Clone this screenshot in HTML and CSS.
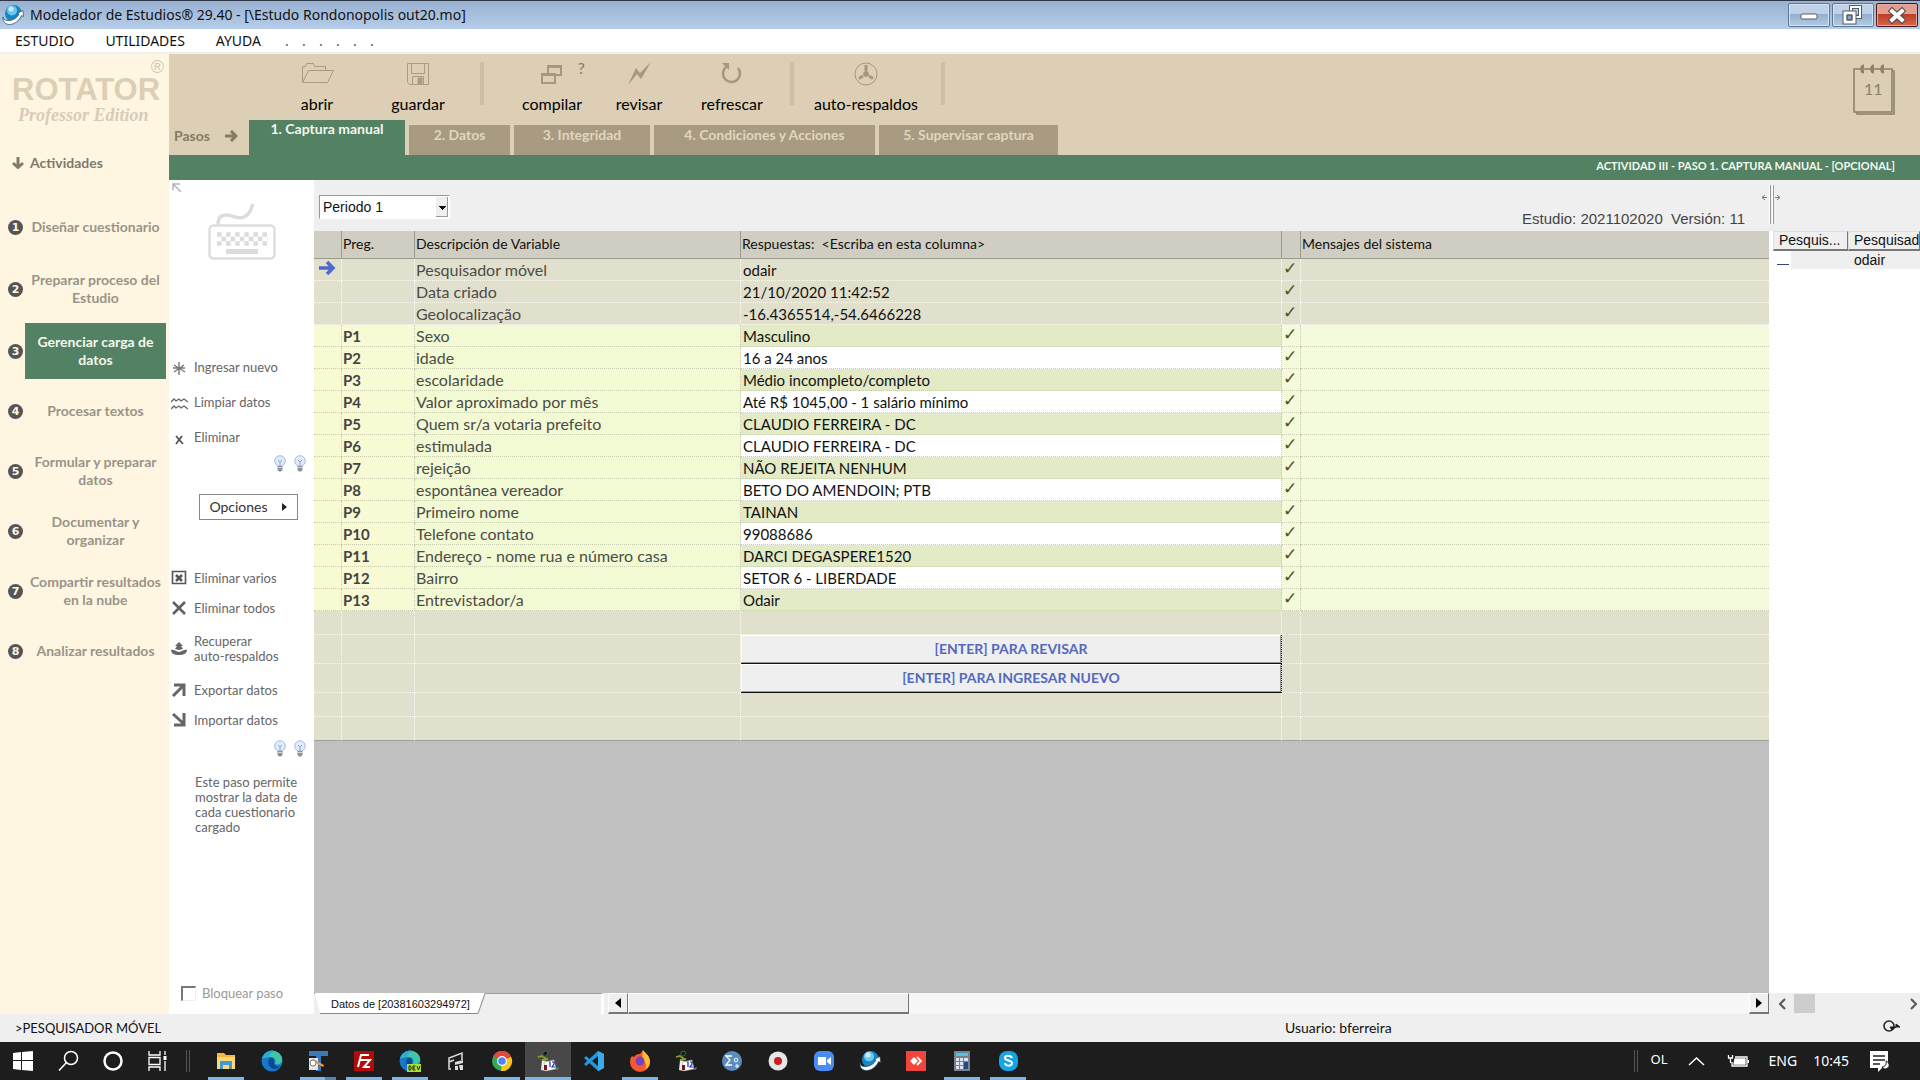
FILE: index.html
```html
<!DOCTYPE html>
<html lang="es">
<head>
<meta charset="utf-8">
<title>Modelador de Estudios</title>
<link rel="stylesheet" href="styles.css">
</head>
<body>
<svg class="defs" aria-hidden="true">
  <symbol id="bulb" viewBox="0 0 14 17">
    <circle cx="7" cy="6" r="5.3" fill="#dfeafa" stroke="#a9bcd8"/>
    <path d="M5 5l2 2 2-2M7 7v4" fill="none" stroke="#8ba6cf"/>
    <path d="M4.500 11h5v4l-1.500 1.500h-2L4.500 15z" fill="#8f9094"/>
    <path d="M4.500 12.500h5" stroke="#d8d8dc"/>
  </symbol>
  <symbol id="globe" viewBox="0 0 22 22">
    <circle cx="11.500" cy="9.500" r="8.500" fill="#1687c4"/>
    <circle cx="10" cy="6.500" r="5" fill="#6cc8ee"/>
    <circle cx="9" cy="5" r="2.500" fill="#c8eefa"/>
    <path d="M1 13c0 4 7 5 12 1.500 2-1.500 3-2.500 4-4.500l-2-.500 6-3 .500 6-2-1c-2 5-7 9-12 9-4 0-7-3-6.500-7.500z" fill="#fff" stroke="#26485e" stroke-width=".7"/>
  </symbol>
  <symbol id="rotator" viewBox="0 0 22 22">
    <path d="M5 10l4 1v10l-5-1z" fill="#eee"/>
    <path d="M7 12l10-2 2 9-10 2z" fill="#fff" stroke="#999" stroke-width=".5"/>
    <path d="M1 7l4-1 4 3M5 10l6-1" stroke="#8fa02a" stroke-width="1.800" fill="none"/>
    <path d="M6 2l3-1 2 2-2 3H6z" fill="#101c10" stroke="#2c7a2c"/>
    <path d="M7 15h3v5H7z" fill="#7b1420"/>
    <path d="M12 12h1v5M15 12h2v2l-2 3h3" stroke="#1c2fa8" stroke-width="1.200" fill="none"/>
    <path d="M18 19l4-2-1 3z" fill="#777"/>
  </symbol>
  <symbol id="edge" viewBox="0 0 22 22">
    <circle cx="11" cy="11" r="10.500" fill="#1679cb"/>
    <path d="M1 9C3 2 9 0 13 1c6 1 9 6 8 10-1 3-4 4-7 3 2-4-1-7-5-7-4 0-7 1-8 2z" fill="#3fc6a8"/>
    <path d="M1 9C3 2 9 0 13 1c-2 1-5 3-5 6C5 6 2 7 1 9z" fill="#2aa9d8"/>
    <path d="M8 9c-2 4 0 9 5 10 3 0 5-1 7-3-3 1-6 0-7-3-1-2 1-3 0-4-2-2-4-1-5 0z" fill="#0c4a90"/>
  </symbol>
</svg>

<header class="titlebar">
  <svg class="app-icon"><use href="#globe"/></svg>
  <h1>Modelador de Estudios® 29.40 - [\Estudo Rondonopolis out20.mo]</h1>
  <div class="window-controls">
    <button class="wbtn" aria-label="Minimizar"><svg width="20" height="20"><rect x="2" y="9" width="16" height="5" rx="1" fill="#fff" stroke="#555c68"/></svg></button>
    <button class="wbtn" aria-label="Restaurar"><svg width="22" height="22" fill="none"><path d="M9 3h9v10H9z" stroke="#555c68" stroke-width="4"/><path d="M9 3h9v10H9z" stroke="#fff" stroke-width="2"/><path d="M3 9h9v9H3z" stroke="#555c68" stroke-width="5" fill="#86a3c4"/><path d="M3 9h9v9H3z" stroke="#fff" stroke-width="3"/><path d="M5 11h5v5H5z" stroke="#555c68"/></svg></button>
    <button class="wbtn close" aria-label="Cerrar"><svg width="20" height="20" stroke-linecap="square"><path d="M5 6l10 9M15 6L5 15" stroke="#50434a" stroke-width="6"/><path d="M5 6l10 9M15 6L5 15" stroke="#fff" stroke-width="4"/></svg></button>
  </div>
</header>

<nav class="menubar">
  <a href="#">ESTUDIO</a><a href="#">UTILIDADES</a><a href="#">AYUDA</a>
  <span class="dots"><i>.</i><i>.</i><i>.</i><i>.</i><i>.</i><i>.</i></span>
</nav>

<div class="workspace">
  <aside class="sidebar">
    <div class="brand">
      <span class="brand-mark">®</span>
      <strong>ROTATOR</strong>
      <em>Professor Edition</em>
    </div>
    <h2 class="side-title"><svg width="12" height="12" fill="none" stroke="#877b63" stroke-width="3"><path d="M6 0v10M1 6l5 4.500L11 6"/></svg>Actividades</h2>
    <ol class="activities">
      <li><b>1</b><a href="#">Diseñar cuestionario</a></li>
      <li class="tall"><b>2</b><a href="#">Preparar proceso del Estudio</a></li>
      <li><b>3</b><a href="#" class="active">Gerenciar carga de datos</a></li>
      <li><b>4</b><a href="#">Procesar textos</a></li>
      <li><b>5</b><a href="#">Formular y preparar datos</a></li>
      <li><b>6</b><a href="#">Documentar y organizar</a></li>
      <li><b>7</b><a href="#">Compartir resultados en la nube</a></li>
      <li><b>8</b><a href="#">Analizar resultados</a></li>
    </ol>
  </aside>

  <div class="content">
    <div class="ribbon">
      <div class="toolbar">
        <button class="tool w-110"><svg width="34" height="24" fill="none" stroke="#aa9c80"><path d="M2.500 20.500V4.500h3l1-3h7l1 3h11v4M2.500 20.500l6-12h25l-6 12z"/></svg>abrir</button>
        <button class="tool w-92"><svg width="24" height="24" fill="none" stroke="#aa9c80"><path d="M1.500 1.500h21v21H3.500l-2-2zM5.500 1.500v10h13v-10M6.500 22.500v-8h11v8"/><path d="M12 16h4v6h-4z" fill="#aa9c80"/></svg>guardar</button>
        <span class="divider"></span>
        <button class="tool w-110 compile"><svg width="24" height="24" fill="none" stroke="#a6987b" stroke-width="2"><path d="M8 12V4h13v9h-5"/><path d="M8 4.500h13" stroke-width="3"/><path d="M2 12h13v9H2z"/><path d="M2 12.500h13" stroke-width="3"/></svg>compilar<span class="help">?</span></button>
        <button class="tool w-64"><svg width="24" height="24" fill="#a6987b"><path d="M24 0L14 17l-4-5-9 11L9 6l4 5z"/></svg>revisar</button>
        <button class="tool w-122"><svg width="22" height="24" fill="none" stroke="#a6987b" stroke-width="2.500"><path d="M5 5a8.500 8.500 0 1 0 12 1"/><path d="M1 1h7v7z" fill="#a6987b" stroke="none"/></svg>refrescar</button>
        <span class="divider"></span>
        <button class="tool w-142"><svg width="24" height="24" fill="none" stroke="#a6987b"><circle cx="12" cy="12" r="11"/><path d="M12 3v6M5 16.500l4-2.500M19 16.500l-4-2.500" stroke-width="3"/><circle cx="12" cy="12" r="2.500" fill="#a6987b"/></svg>auto-respaldos</button>
        <span class="divider"></span>
      </div>
      <div class="calendar">
        <svg width="44" height="52" fill="none" stroke="#8d8065" stroke-width="1.500"><path d="M2 5h38v43H2zM40 7h2v43H5v-2"/><g stroke-width="3"><path d="M12 2c-3 0-3 6 0 6M22 2c-3 0-3 6 0 6M32 2c-3 0-3 6 0 6"/></g></svg>
        <span>11</span>
      </div>
      <div class="tabs">
        <span class="steps">Pasos <svg width="13" height="12" fill="none" stroke="#877b63" stroke-width="3"><path d="M0 6h10M6 1l5 5-5 5"/></svg></span>
        <button class="tab current t-156">1. Captura manual</button>
        <button class="tab t-101">2. Datos</button>
        <button class="tab t-136">3. Integridad</button>
        <button class="tab t-221">4. Condiciones y Acciones</button>
        <button class="tab t-179">5. Supervisar captura</button>
      </div>
    </div>
    <div class="step-title">ACTIVIDAD III - PASO 1. CAPTURA MANUAL - [OPCIONAL]</div>

    <div class="panes">
      <section class="tools">
        <svg class="corner" width="10" height="10" fill="none" stroke="#b5b5b5" stroke-width="1.500"><path d="M1 7V1h7M1 1l8 8"/></svg>
        <svg class="keyboard" width="68" height="58" fill="none" stroke="#dcdcdc"><path d="M10 22c0-8 3-10 9-10s10 5 17 2c6-3 6-6 9-13" stroke-width="3.500"/><rect x="1.500" y="22.500" width="65" height="33" rx="4" stroke="#dfdde0" stroke-width="2.500"/><path d="M9 31.500h50" stroke-width="4.500" stroke-dasharray="4.500 4.600"/><path d="M13.500 36h46" stroke-width="4.500" stroke-dasharray="4.500 4.600"/><path d="M9 40.500h50" stroke-width="4.500" stroke-dasharray="4.500 4.600"/><path d="M18 48.500h32" stroke-width="5"/></svg>
        <div class="actions first">
          <button><svg width="16" height="16" stroke="#777" stroke-width="1.400"><path d="M8 2v13M3 5l11 7M13 5L3 12M2 8h12"/></svg>Ingresar nuevo</button>
          <button><svg width="18" height="16" fill="none" stroke="#666" stroke-width="1.300"><path d="M0 7l3-3 2 2 3-2 2 2 3-2 4 3M0 14l3-3 2 2 3-2 2 2 3-2 4 3"/></svg>Limpiar datos</button>
          <button><svg width="16" height="16" stroke="#555" stroke-width="1.800"><path d="M5 6l7 8M11 6l-6 8"/></svg>Eliminar</button>
        </div>
        <div class="bulbs"><svg><use href="#bulb"/></svg><svg><use href="#bulb"/></svg></div>
        <button class="options">Opciones <svg width="6" height="8"><path d="M0 0l5 4-5 4z" fill="#222"/></svg></button>
        <div class="actions second">
          <button><svg width="16" height="16" fill="none" stroke="#555" stroke-width="1.600"><path d="M1.500 1.500h13v12h-13z"/><path d="M5 5l6 6M11 5l-6 6" stroke-width="2.500"/></svg>Eliminar varios</button>
          <button><svg width="16" height="16" stroke="#606060" stroke-width="2.500"><path d="M2 2l12 12M14 2L2 14"/></svg>Eliminar todos</button>
          <button class="two-line"><svg width="17" height="16" fill="#666"><path d="M0 9c3-1 5 2 8 2s5-3 8-2c0 3-3 5-8 5s-8-2-8-5zM8 1l4 4h-2l2 3-4 1-4-1 2-3H4z"/></svg><span>Recuperar<br>auto-respaldos</span></button>
          <button><svg width="16" height="16" fill="none" stroke="#666" stroke-width="3"><path d="M2 14L13 3M3 3h10v11"/></svg>Exportar datos</button>
          <button><svg width="16" height="16" fill="none" stroke="#666" stroke-width="3"><path d="M2 2l11 10M13 1v12H3"/></svg>Importar datos</button>
        </div>
        <div class="bulbs"><svg><use href="#bulb"/></svg><svg><use href="#bulb"/></svg></div>
        <p class="hint">Este paso permite mostrar la data de cada cuestionario cargado</p>
        <label class="lock"><input type="checkbox">Bloquear paso</label>
      </section>

      <section class="capture">
        <div class="capture-head">
          <select class="period" aria-label="Periodo"><option>Periodo 1</option></select>
          <span class="study">Estudio: 2021102020&nbsp; Versión: 11</span>
        </div>
        <div class="sheet">
        <table class="grid">
          <colgroup><col class="c-mark"><col class="c-num"><col class="c-desc"><col class="c-ans"><col class="c-ok"><col></colgroup>
          <thead><tr><th></th><th>Preg.</th><th>Descripción de Variable</th><th>Respuestas: &nbsp;&lt;Escriba en esta columna&gt;</th><th></th><th>Mensajes del sistema</th></tr></thead>
          <tbody class="meta">
            <tr><td><svg width="17" height="14" fill="none" stroke="#4f68cf" stroke-width="3.500"><path d="M0 7h13M8 1l6 6-6 6"/></svg></td><td></td><td>Pesquisador móvel</td><td>odair</td><td>✓</td><td></td></tr>
            <tr><td></td><td></td><td>Data criado</td><td>21/10/2020 11:42:52</td><td>✓</td><td></td></tr>
            <tr><td></td><td></td><td>Geolocalização</td><td>-16.4365514,-54.6466228</td><td>✓</td><td></td></tr>
          </tbody>
          <tbody class="answers">
            <tr><td></td><td>P1</td><td>Sexo</td><td>Masculino</td><td>✓</td><td></td></tr>
            <tr><td></td><td>P2</td><td>idade</td><td>16 a 24 anos</td><td>✓</td><td></td></tr>
            <tr><td></td><td>P3</td><td>escolaridade</td><td>Médio incompleto/completo</td><td>✓</td><td></td></tr>
            <tr><td></td><td>P4</td><td>Valor aproximado por mês</td><td>Até R$ 1045,00 - 1 salário mínimo</td><td>✓</td><td></td></tr>
            <tr><td></td><td>P5</td><td>Quem sr/a votaria prefeito</td><td>CLAUDIO FERREIRA - DC</td><td>✓</td><td></td></tr>
            <tr><td></td><td>P6</td><td>estimulada</td><td>CLAUDIO FERREIRA - DC</td><td>✓</td><td></td></tr>
            <tr><td></td><td>P7</td><td>rejeição</td><td>NÃO REJEITA NENHUM</td><td>✓</td><td></td></tr>
            <tr><td></td><td>P8</td><td>espontânea vereador</td><td>BETO DO AMENDOIN; PTB</td><td>✓</td><td></td></tr>
            <tr><td></td><td>P9</td><td>Primeiro nome</td><td>TAINAN</td><td>✓</td><td></td></tr>
            <tr><td></td><td>P10</td><td>Telefone contato</td><td>99088686</td><td>✓</td><td></td></tr>
            <tr><td></td><td>P11</td><td>Endereço - nome rua e número casa</td><td>DARCI DEGASPERE1520</td><td>✓</td><td></td></tr>
            <tr><td></td><td>P12</td><td>Bairro</td><td>SETOR 6 - LIBERDADE</td><td>✓</td><td></td></tr>
            <tr><td></td><td>P13</td><td>Entrevistador/a</td><td>Odair</td><td>✓</td><td></td></tr>
          </tbody>
          <tbody class="foot">
            <tr><td></td><td></td><td></td><td></td><td></td><td></td></tr>
            <tr class="cta"><td></td><td></td><td></td><td><button>[ENTER] PARA REVISAR</button></td><td></td><td></td></tr>
            <tr class="cta"><td></td><td></td><td></td><td><button>[ENTER] PARA INGRESAR NUEVO</button></td><td></td><td></td></tr>
            <tr><td></td><td></td><td></td><td></td><td></td><td></td></tr>
            <tr><td></td><td></td><td></td><td></td><td></td><td></td></tr>
          </tbody>
        </table>
        </div>
        <div class="sheet-bar">
          <div class="sheet-tabs">
            <svg width="172" height="21" aria-hidden="true"><path d="M1 0l5 20h158l7-20z" fill="#fff"/><path d="M6 20.500h158l7-20" fill="none" stroke="#888"/></svg>
            <span>Datos de [20381603294972]</span>
          </div>
          <button class="scroll-btn" aria-label="Anterior"><svg width="6" height="10"><path d="M6 0L0 5l6 5z"/></svg></button>
          <div class="scroll-thumb"></div>
          <div class="scroll-track"></div>
          <button class="scroll-btn" aria-label="Siguiente"><svg width="6" height="10"><path d="M0 0l6 5-6 5z"/></svg></button>
        </div>
      </section>

      <section class="people">
        <div class="splitter">
          <svg width="18" height="40" fill="none" stroke="#777"><path d="M0 12.500h5M3 10l-3 2.500L3 15M13 12.500h5M15 10l3 2.500-3 2.500"/><path d="M8.500 0v39M11.500 0v39" stroke="#999"/><path d="M7.500 0v39M10.500 0v39" stroke="#fff"/></svg>
        </div>
        <div class="people-list">
          <table>
            <colgroup><col class="p-id"><col></colgroup>
            <thead><tr><th>Pesquis...</th><th>Pesquisad</th></tr></thead>
            <tbody><tr><td><span class="dash"></span></td><td>odair</td></tr></tbody>
          </table>
        </div>
        <div class="mini-scroll">
          <svg width="8" height="12" fill="none" stroke="#555" stroke-width="2"><path d="M7 1L2 6l5 5"/></svg>
          <span></span>
          <svg width="8" height="12" fill="none" stroke="#555" stroke-width="2"><path d="M1 1l5 5-5 5"/></svg>
        </div>
      </section>
    </div>
  </div>
</div>

<footer class="statusbar">
  <span class="current-field">&gt;PESQUISADOR MÓVEL</span>
  <span class="user">Usuario: bferreira</span>
  <svg width="20" height="16" fill="none" stroke="#222" stroke-width="1.600"><circle cx="8" cy="6" r="5"/><path d="M9 7h10l-4-3v3l-4 3z" fill="#111" stroke-width="1"/></svg>
</footer>

<div class="taskbar">
  <div class="system">
    <button aria-label="Inicio"><svg width="22" height="22" fill="#fff"><path d="M1 3l8-1v8H1zM10 2l11-1v9H10zM1 11h8v9l-8-1zM10 11h11v10l-11-1z"/></svg></button>
    <button aria-label="Buscar"><svg width="22" height="22" fill="none" stroke="#fff" stroke-width="1.500"><circle cx="14" cy="8" r="6.500"/><path d="M9.500 12.500L2 20.500"/></svg></button>
    <button aria-label="Cortana"><svg width="22" height="22" fill="none"><circle cx="11" cy="11" r="8.500" stroke="#fff" stroke-width="2.500"/></svg></button>
    <button aria-label="Vista de tareas"><svg width="22" height="22" fill="none" stroke="#fff" stroke-width="1.300"><path d="M2 1v4h11V1M2 21v-4h11v4M2 7.500h11v7H2zM18 1v4M18 11v10"/><path d="M18 6v4" stroke-width="3"/></svg></button>
    <span class="grip"></span>
  </div>
  <div class="apps">
    <button class="running" aria-label="Explorador"><svg width="22" height="22"><path d="M2 3h7l2 2h9v14H2z" fill="#f3b93c"/><path d="M2 7h18v12H2z" fill="#fbd874"/><path d="M5 19v-8h12v8h-3v-4H8v4z" fill="#3f9bd4"/></svg></button>
    <button aria-label="Edge"><svg width="22" height="22"><use href="#edge"/></svg></button>
    <button class="running multi" aria-label="Editor"><svg width="22" height="22"><path d="M2 1h19v5h-7v15H9V6H2z" fill="#3d78b8"/><path d="M2 8h9v12H2z" fill="#e5e5e5"/><path d="M6 9l11 6-1 2-11-6z" fill="#f39a2d"/><circle cx="6" cy="13" r="3" fill="#fff" stroke="#777"/></svg></button>
    <button class="running" aria-label="FileZilla"><svg width="22" height="22" fill="none"><path d="M1 1h20v20H1z" fill="#b40a0a"/><path d="M5 17L8 5h8M7 10h6M11 10h6l-6 7h6" stroke="#fff" stroke-width="2"/></svg></button>
    <button class="running" aria-label="Edge Dev"><svg width="22" height="22"><use href="#edge"/><rect x="8" y="14" width="14" height="8" fill="#a5e62c"/><path d="M10 16v4h1.500l.500-1v-2l-.500-1zM16.500 16H14v4h2.500M14 18h2M18 16l1.500 4 1.500-4" fill="none" stroke="#222"/></svg></button>
    <button aria-label="Proyector"><svg width="22" height="22" fill="none" stroke="#ddd" stroke-width="1.500"><path d="M6 19H4V8l13-5v7M4 12l5-2"/><path d="M10 12l8-2v3l-8 2zM10 16h3v4h-3zM14 15h4v5h-3z" fill="#ddd" stroke="none"/></svg></button>
    <button class="running" aria-label="Chrome"><svg width="22" height="22"><circle cx="11" cy="11" r="10" fill="#3aa757"/><path d="M11 11L2.300 6A10 10 0 0 1 20.200 7z" fill="#e04a3a"/><path d="M11 11l9.200-4A10 10 0 0 1 10 21z" fill="#fbc61c"/><circle cx="11" cy="11" r="5" fill="#fff"/><circle cx="11" cy="11" r="3.800" fill="#4b87ee"/></svg></button>
    <button class="running focused" aria-label="Rotator"><svg width="22" height="22"><use href="#rotator"/></svg></button>
    <button aria-label="VS Code"><svg width="22" height="22"><path d="M15 1l6 3v14l-6 3L1 8l2-2 12 10V6L3 16l-2-2z" fill="#2398df"/><path d="M15 1l6 3v14l-6 3z" fill="#3aabec"/></svg></button>
    <button class="running" aria-label="Firefox"><svg width="22" height="22"><path d="M3 6l2 1c2-3 4-3 6-3l3-4c3 4 7 6 7 12a10 10 0 0 1-20 0c0-3 1-5 2-6z" fill="#f5572f"/><path d="M14 0c3 4 7 6 7 12 0 3-2 6-5 8 2-4 1-8-3-10z" fill="#fdbf2d"/><circle cx="11" cy="11" r="4.500" fill="#7a3fc0"/></svg></button>
    <button aria-label="Rotator captura"><svg width="22" height="22"><use href="#rotator"/></svg></button>
    <button aria-label="Estadísticas"><svg width="22" height="22" fill="none" stroke="#fff"><circle cx="11" cy="11" r="10" fill="#5a8cc0" stroke="none"/><path d="M11 6H5l4 4-4 5h6" stroke-width="1.300"/><circle cx="15" cy="10" r="1.800"/><path d="M14 16h4M16 14v4"/></svg></button>
    <button aria-label="Grabadora"><svg width="22" height="22"><circle cx="11" cy="11" r="9.500" fill="#e6e6e6"/><circle cx="11" cy="11" r="4" fill="#c82020"/></svg></button>
    <button aria-label="Zoom"><svg width="22" height="22"><rect x="1" y="1" width="20" height="20" rx="6" fill="#4a8cf5"/><path d="M5 7h8v8H5zM14 10l4-3v8l-4-3z" fill="#fff"/></svg></button>
    <button aria-label="Modelador"><svg width="22" height="22"><use href="#globe"/></svg></button>
    <button aria-label="AnyDesk"><svg width="22" height="22"><path d="M1 1h20v20H1z" fill="#f2443a"/><path d="M9 7l4 4-4 4-4-4z" fill="#fff"/><path d="M12 7l4 4-4 4" fill="none" stroke="#fff" stroke-width="1.800"/></svg></button>
    <button class="running" aria-label="Calculadora"><svg width="22" height="22"><path d="M3 1h16v20H3z" fill="#78818c"/><path d="M5 3h12v3H5z" fill="#48c6ea"/><path d="M5 8h3v3H5zM9 8h3v3H9zM13 8h4v3h-4zM5 12h3v3H5zM9 12h3v3H9zM5 16h3v3H5zM9 16h3v3H9z" fill="#dce4ec"/><path d="M13 12h4v7h-4z" fill="#1e4a88"/></svg></button>
    <button class="running" aria-label="Skype"><svg width="22" height="22"><rect x="2" y="1" width="19" height="20" rx="8" fill="#14a4e8"/><path d="M15 8c-1-3-7-3-7 0s7 2 7 5c0 4-7 3-7 0" fill="none" stroke="#fff" stroke-width="2"/></svg></button>
  </div>
  <div class="tray">
    <span class="grip"></span>
    <span class="layout">OL</span>
    <svg width="17" height="10" fill="none" stroke="#fff" stroke-width="1.500"><path d="M1 9l7.500-7L16 9"/></svg>
    <svg class="battery" width="22" height="14" fill="none" stroke="#fff" stroke-width="1.300"><path d="M8 3h12v9H5V8M21.500 6v3M1.500 1v3h4V1M3.500 4v5"/><path d="M8 5h10v5H7z" fill="#fff"/></svg>
    <span>ENG</span>
    <time>10:45</time>
    <svg class="notes" width="22" height="22"><path d="M1 1h18v17h-6l-4 4v-4H1z" fill="#fff"/><path d="M4 6h12M4 10h12M4 14h7" stroke="#222" stroke-width="1.500"/><path d="M17 11c1 3-1 6-4 6 3 4 8 1 7-3-1-2-2-3-3-3z" fill="#fff" stroke="#222"/></svg>
  </div>
</div>
</body>
</html>
```

FILE: styles.css
```css
:root {
  --ui: Lato, "Noto Sans", sans-serif;
  --system: "Noto Sans", "Open Sans", sans-serif;
  --arial: "Liberation Sans", Arial, sans-serif;
  --green: #528164;
  --sand: #dccfb5;
}

* { box-sizing: border-box; }
body {
  margin: 0;
  min-height: 100vh;
  display: flex;
  flex-direction: column;
  font: 14px/18px var(--ui);
  color: #111;
  background: #efefef;
}
button { font: inherit; color: inherit; border: 0; padding: 0; margin: 0; background: none; }
a { color: inherit; text-decoration: none; }
h1, h2, p, ol { margin: 0; padding: 0; font-size: inherit; font-weight: inherit; }
svg { flex: none; }
.defs { display: none; }

/* Title and menu */
.titlebar {
  height: 29px;
  display: flex;
  align-items: center;
  padding: 0 2px 1px;
  border-top: 1px solid #303848;
  background: linear-gradient(#98b1d1, #b5cde8);
}
.app-icon { width: 22px; height: 22px; }
.titlebar h1 { margin-left: 6px; font: 14px/20px var(--system); }
.window-controls { margin-left: auto; display: flex; gap: 2px; }
.wbtn {
  width: 42px;
  height: 24px;
  display: grid;
  place-items: center;
  border: 1px solid #5c7795;
  border-radius: 2px;
  box-shadow: inset 0 0 0 1px #d5e3f2;
  background: linear-gradient(#bed1e8 45%, #93aecd 46%, #b3cbe4);
}
.wbtn.close {
  border-color: #4a1519;
  box-shadow: inset 0 0 0 1px #e8a99c;
  background: linear-gradient(#e2a093 45%, #bb3c26 46%, #d4684b);
}
.menubar {
  height: 25px;
  display: flex;
  align-items: center;
  gap: 31px;
  padding-left: 15px;
  border-bottom: 2px solid #efefef;
  background: #fff;
  font: 14px/20px var(--system);
}
.dots { display: flex; color: #555; margin-left: -7px; }
.dots i { width: 17px; font-style: normal; }

.workspace { flex: 1; display: flex; }

/* Activities */
.sidebar { width: 169px; background: #fff6e2; color: #999488; }
.brand { padding: 5px 0 0 12px; color: #dccfb5; }
.brand-mark { display: block; padding-right: 5px; text-align: right; font: 18px/16px var(--arial); color: #d2c7b3; }
.brand strong { display: block; font: bold 31px/30px var(--arial); }
.brand em { display: block; padding-left: 6px; font: italic bold 18px/20px "Liberation Serif", serif; color: #d8ccb6; }
.side-title {
  display: flex;
  align-items: center;
  gap: 6px;
  margin: 29px 0 25px 12px;
  font: bold 14px/18px var(--ui);
  color: #807a6c;
}
.activities { list-style: none; }
.activities li { min-height: 60px; display: flex; align-items: center; gap: 2px; padding-left: 8px; }
.activities .tall { min-height: 64px; }
.activities b {
  width: 15px;
  height: 15px;
  flex: none;
  border-radius: 50%;
  background: #555;
  color: #fff6e2;
  text-align: center;
  font: bold 11px/15px "DejaVu Sans", sans-serif;
}
.activities a { width: 141px; min-height: 56px; padding: 0 4px; display: grid; place-items: center; text-align: center; font-weight: bold; }
.activities .active { background: var(--green); color: #f4f8ee; }

/* Ribbon */
.content { flex: 1; min-width: 0; display: flex; flex-direction: column; }
.ribbon { display: grid; grid-template-columns: 1fr auto; grid-template-rows: 66px 35px; background: var(--sand); }
.toolbar { display: flex; padding: 8px 0 0 93px; }
.tool { height: 52px; display: flex; flex-direction: column; align-items: center; justify-content: space-between; font-size: 16px; line-height: 20px; color: #000; }
.w-64 { width: 64px; }
.w-92 { width: 92px; }
.w-110 { width: 110px; }
.w-122 { width: 122px; }
.w-142 { width: 142px; }
.divider { width: 4px; height: 43px; margin: 0 1px 0 16px; background: #cdbfa5; }
.w-142 + .divider { margin-left: 4px; }
.w-122 + .divider { margin-left: -3px; }
.compile { position: relative; margin-left: 12px; }
.help { position: absolute; top: -4px; right: 22px; font-size: 16px; color: #887c66; }
.calendar { position: relative; width: 44px; margin: 10px 24px 0 0; }
.calendar span { position: absolute; top: 15px; left: 12px; font: 16px/20px var(--ui); color: #8d8065; }
.tabs { grid-column: 1 / -1; display: flex; align-items: flex-end; gap: 4px; font-weight: bold; }
.steps { width: 76px; display: flex; align-items: center; justify-content: space-between; align-self: flex-start; padding: 7px 7px 0 5px; color: #877b63; }
.tab { height: 30px; padding-bottom: 11px; background: #a99b81; color: #e0d6c0; }
.tab.current { height: 35px; padding-bottom: 17px; background: var(--green); color: #f4f8ee; }
.t-101 { width: 101px; }
.t-136 { width: 136px; }
.t-156 { width: 156px; }
.t-179 { width: 179px; }
.t-221 { width: 221px; }
.step-title { height: 25px; padding: 2px 25px 0 0; text-align: right; font: bold 11px/18px var(--ui); background: var(--green); color: #f4f8ee; }

/* Tools column */
.panes { flex: 1; display: flex; min-width: 0; }
.tools { width: 145px; display: flex; flex-direction: column; background: #fff; color: #666; font-size: 13px; line-height: 15px; }
.corner { margin: 3px 0 0 3px; }
.keyboard { margin: 10px 0 0 39px; }
.actions { display: flex; flex-direction: column; padding-left: 2px; }
.actions button { min-height: 30px; display: grid; grid-template-columns: 23px 1fr; align-content: center; align-items: center; text-align: left; }
.actions.first { margin-top: 89px; }
.actions.first button { min-height: 35px; }
.actions.second { margin-top: 43px; }
.actions .two-line { min-height: 52px; }
.bulbs { display: flex; justify-content: flex-end; gap: 6px; padding-right: 7px; }
.bulbs svg { width: 14px; height: 17px; }
.actions.second + .bulbs { margin-top: 5px; }
.options { width: 99px; height: 26px; display: flex; align-items: center; justify-content: center; gap: 14px; margin: 22px 0 0 30px; border: 1px solid #888; font-size: 14px; line-height: 18px; color: #333; }
.hint { margin: 18px 10px 0 26px; }
.lock { display: flex; align-items: center; gap: 6px; margin: auto 0 13px 12px; color: #999; }
.lock input { appearance: none; width: 15px; height: 15px; margin: 0; border: 1px solid #eee; border-top: 2px solid #777; border-left: 2px solid #777; background: #fff; }

/* Capture grid */
.capture { flex: 1; min-width: 0; display: flex; flex-direction: column; }
.capture-head { height: 51px; display: flex; justify-content: space-between; align-items: flex-start; padding: 15px 24px 0 5px; font-family: var(--arial); }
.period {
  appearance: none;
  width: 131px;
  height: 24px;
  padding: 0 3px;
  border: 1px solid #fff;
  border-top-color: #999;
  border-left-color: #999;
  border-radius: 0;
  color: #111;
  font: 14px/20px var(--arial);
  background:
    linear-gradient(#111, #111) right 3px top 10px / 7px 1px no-repeat,
    linear-gradient(#111, #111) right 4px top 11px / 5px 1px no-repeat,
    linear-gradient(#111, #111) right 5px top 12px / 3px 1px no-repeat,
    linear-gradient(#111, #111) right 6px top 13px / 1px 1px no-repeat,
    linear-gradient(#efefef, #efefef) right 2px top 1px / 11px 19px no-repeat,
    linear-gradient(#999, #999) right 1px top 1px / 12px 20px no-repeat,
    #fff;
}
.study { padding-top: 15px; font-size: 15px; color: #444; }
.sheet { flex: 1; background: #c0c0c0; }
.grid { width: 100%; table-layout: fixed; border-spacing: 0; font-size: 15px; line-height: 20px; }
.c-mark { width: 28px; }
.c-num { width: 73px; }
.c-desc { width: 326px; }
.c-ans { width: 541px; }
.c-ok { width: 19px; }
.grid th { height: 28px; padding: 0 1px 2px; text-align: left; font-size: 14px; font-weight: normal; white-space: nowrap; background: #d0cec2; border-bottom: 1px solid #9b9a8e; border-right: 1px solid #9b9a8e; }
.grid td { height: 22px; padding: 1px 2px 0 1px; white-space: nowrap; border-bottom: 1px dotted #c9cbb0; border-right: 1px dotted #c9cbb0; line-height: 20px; }
.grid th:last-child, .grid td:last-child { border-right: 0; }
.grid td:first-child svg { display: block; margin: 0 0 4px 4px; }
.grid td:nth-child(2) { font-weight: bold; color: #444; }
.grid td:nth-child(3) { font-size: 16px; color: #4c4c48; }
.grid td:nth-child(4) { padding-left: 2px; }
.grid td:nth-child(5) { padding: 0 0 3px 1px; font: 17px/18px "DejaVu Sans", sans-serif; color: #4a5320; }
.meta td, .foot td { background: #e1e0cd; border-color: #fafaf0; }
.answers td { background: #f4fadc; }
.answers td:nth-child(-n+2) { background: #f8fad4; }
.answers td:nth-child(3) { background: #f2fad3; }
.answers td:nth-child(4) { background: #e2eac6; }
.answers tr:nth-child(even) td:nth-child(4) { background: #fff; }
.foot td { height: 24px; }
.foot tr:last-child td { border-bottom: 1px solid #a0a098; }
.foot .cta td { height: 29px; padding: 0; }
.foot .cta td:nth-child(4) { padding: 0; border-right-color: #111; border-bottom: 1px solid #111; }
.cta button { display: block; width: 100%; height: 28px; border: 1px solid #fff; border-right-color: #999; border-bottom-color: #999; background: #efefef; color: #5369c0; font: bold 14px/20px var(--ui); }

.sheet-bar { height: 21px; display: flex; background: #efefef; }
.sheet-tabs { position: relative; width: 290px; border-top: 1px solid #a0a0a0; border-right: 3px solid #fff; margin-right: 4px; }
.sheet-tabs svg { display: block; margin-top: -1px; }
.sheet-tabs span { position: absolute; top: 1px; left: 17px; font: 11px/18px var(--arial); white-space: nowrap; }
.scroll-btn { width: 20px; display: grid; place-items: center; background: #efefef; border: 1px solid #fff; border-right-color: #777; border-bottom: 2px solid #777; }
.scroll-thumb { width: 281px; border: 1px solid #fff; border-right: 1px solid #777; border-bottom: 2px solid #777; background: #efefef; }
.scroll-track { flex: 1; background: #f7f7f7; }

/* People list */
.people { width: 151px; display: flex; flex-direction: column; font: 14px/18px var(--arial); overflow: clip; overflow-clip-margin: 8px; }
.splitter { height: 51px; padding-top: 5px; }
.splitter svg { display: block; margin-left: -7px; }
.people-list { flex: 1; padding-left: 4px; background: #fff; overflow: hidden; }
.people-list table { width: 100%; table-layout: fixed; border-spacing: 0; }
.p-id { width: 75px; }
.people-list th { height: 20px; padding: 0 5px; line-height: 17px; text-align: left; font-weight: normal; background: #efefef; border: 1px solid #ddd; border-right: 1px solid #777; border-bottom: 2px solid #777; }
.people-list td { height: 18px; padding: 0 6px; line-height: 18px; background: #efefef; }
.people-list td:first-child { padding: 0 0 0 4px; background: linear-gradient(90deg, #fff 18px, #efefef 18px); }
.dash { display: block; width: 12px; height: 1px; margin-top: 8px; background: #2a4c78; }
.mini-scroll { height: 21px; display: flex; align-items: center; padding: 0 2px 0 9px; }
.mini-scroll span { width: 21px; height: 19px; margin: 0 auto 0 8px; background: #cdcdcd; }

/* Status bar */
.statusbar { height: 28px; display: grid; grid-template-columns: 1270px 1fr auto; align-items: center; padding: 0 19px 0 15px; }
.current-field { font-size: 13px; }

/* Taskbar */
.taskbar { height: 38px; display: flex; background: #1d1d1d; color: #fff; }
.system { display: flex; }
.system button { width: 45px; display: grid; place-items: center; }
.grip { width: 4px; height: 22px; margin: 8px 0 0 6px; border: 1px solid #555; border-width: 0 1px; }
.apps { display: flex; margin-left: 13px; }
.apps button { width: 46px; padding-top: 3px; display: grid; place-items: center; border-bottom: 3px solid transparent; }
.apps button.running { background: linear-gradient(#7db5e6, #7db5e6) center bottom / 36px 3px no-repeat border-box; }
.apps button.focused { background: linear-gradient(#7db5e6, #7db5e6) center bottom / 46px 3px no-repeat border-box, #484848; }
.apps button.multi { background: linear-gradient(90deg, #7db5e6 25px, #5682ab 25px) center bottom / 36px 3px no-repeat border-box; }
.tray { margin-left: auto; display: flex; align-items: center; gap: 20px; padding-right: 29px; font: 14px/20px var(--system); }
.tray .grip { margin: 0 -7px 0 0; }
.layout { padding-bottom: 4px; font-size: 13px; }
.battery { margin-left: 2px; }
.tray span + time { margin-left: -4px; }
```
